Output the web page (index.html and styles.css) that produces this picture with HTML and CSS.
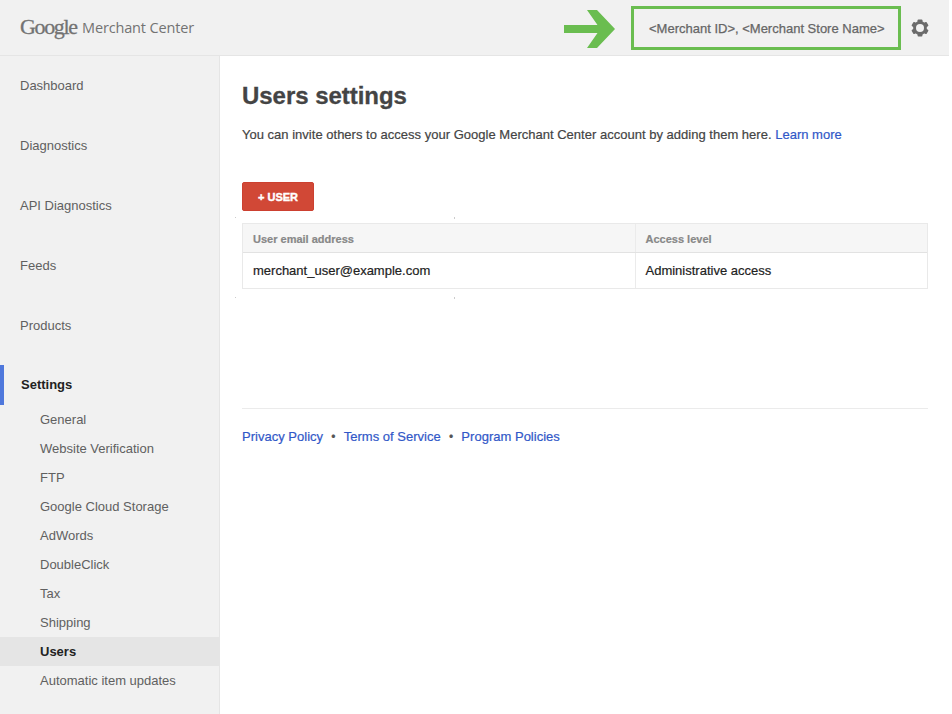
FILE: index.html
```html
<!DOCTYPE html>
<html lang="en">
<head>
<meta charset="utf-8">
<title>Google Merchant Center</title>
<link rel="stylesheet" href="styles.css">
</head>
<body>
<header class="topbar">
  <div class="brand"><span class="brand-google">Google</span><span class="brand-product">Merchant Center</span></div>
  <div class="account">
    <svg class="arrow" width="52" height="38" viewBox="0 0 52 38"><path d="M0 15H33.500L23 0H33L51 19L33 38H23L33.500 23H0Z" fill="#6abd50"/></svg>
    <div class="account-name"><span>&lt;Merchant ID&gt;, &lt;Merchant Store Name&gt;</span></div>
    <svg class="gear" width="18" height="18" viewBox="-9 -9 18 18" fill="#6b6b6b">
      <g><rect x="-2.400" y="-8.600" width="4.800" height="17.200" rx=".8"/><rect x="-2.400" y="-8.600" width="4.800" height="17.200" rx=".8" transform="rotate(60)"/><rect x="-2.400" y="-8.600" width="4.800" height="17.200" rx=".8" transform="rotate(120)"/></g>
      <circle r="6.900"/><circle r="4" fill="#f1f1f1"/>
    </svg>
  </div>
</header>
<div class="layout">
  <nav class="sidebar">
    <a class="item">Dashboard</a>
    <a class="item">Diagnostics</a>
    <a class="item">API Diagnostics</a>
    <a class="item">Feeds</a>
    <a class="item">Products</a>
    <a class="item active">Settings</a>
    <div class="sub">
      <a>General</a>
      <a>Website Verification</a>
      <a>FTP</a>
      <a>Google Cloud Storage</a>
      <a>AdWords</a>
      <a>DoubleClick</a>
      <a>Tax</a>
      <a>Shipping</a>
      <a class="current">Users</a>
      <a>Automatic item updates</a>
    </div>
  </nav>
  <main class="content">
    <h1>Users settings</h1>
    <p class="intro">You can invite others to access your Google Merchant Center account by adding them here. <a class="learn">Learn more</a></p>
    <button class="add">+ USER</button>
    <div class="users">
      <i class="tick tl"></i><i class="tick tr"></i><i class="tick bl"></i><i class="tick br"></i>
      <div class="row head"><span>User email address</span><span>Access level</span></div>
      <div class="row"><span class="email">merchant_user@example.com</span><span class="level">Administrative access</span></div>
    </div>
    <footer class="footer"><a>Privacy Policy</a><b>•</b><a>Terms of Service</a><b>•</b><a>Program Policies</a></footer>
  </main>
</div>
</body>
</html>
```
FILE: styles.css
```css
* { box-sizing: border-box; }
body { margin: 0; width: 952px; height: 714px; overflow: hidden; background: #fff; color: #444; font: 13px/20px "Liberation Sans", Arial, sans-serif; display: flex; flex-direction: column; }
.topbar { width: 949px; height: 56px; flex: none; background: #f1f1f1; border-bottom: 1px solid #e5e5e5; display: flex; justify-content: space-between; padding: 0 20px; }
.brand { display: flex; align-items: flex-start; color: #737373; padding-top: 12px; white-space: nowrap; }
.brand-google { width: 62px; font: 22px/30px "Liberation Serif", serif; letter-spacing: -1.35px; -webkit-text-stroke: .3px #737373; }
.brand-product { font: 14.5px/32px "Open Sans", sans-serif; letter-spacing: -.15px; }
.account { display: flex; align-items: flex-start; }
.arrow { margin: 10px 15px 0 0; }
.account-name { width: 270px; height: 44px; margin-top: 6px; border: 3px solid #6abd50; padding: 10px 0 0 15px; color: #666; white-space: nowrap; -webkit-text-stroke: .25px; }
.gear { margin: 19px 0 0 10px; }
.layout { display: flex; flex: 1; }
.sidebar { width: 220px; background: #f1f1f1; border-right: 1px solid #e5e5e5; padding-top: 9px; color: #606060; }
.item { display: block; height: 40px; margin-bottom: 20px; padding-left: 20px; line-height: 42px; }
.active { margin-bottom: 0; border-left: 4px solid #4f78dc; padding-left: 17px; color: #222; font-weight: bold; line-height: 40px; }
.sub a { display: block; height: 29px; padding-left: 40px; line-height: 29px; }
.sub .current { background: #e5e5e5; color: #222; font-weight: bold; }
.content { width: 708px; padding: 24px 0 0 22px; }
h1 { margin: 0; font-size: 24px; line-height: 32px; letter-spacing: -.04px; -webkit-text-stroke: .3px; }
.intro { margin: 13px 0 0; white-space: nowrap; letter-spacing: .012px; -webkit-text-stroke: .2px; }
.intro a, .footer a { color: #3158c8; }
.add { display: block; width: 72px; height: 29px; margin: 37px 0 12px; padding: 1px 0 0; background: #d14836; border: 1px solid #cc4030; border-radius: 2px; color: #fff; font: bold 11px/27px "Liberation Sans", sans-serif; -webkit-text-stroke: .4px; }
.users { position: relative; width: 686px; border: 1px solid #e9e9e9; }
.row { display: grid; grid-template-columns: 392px 1fr; height: 35px; line-height: 35px; color: #222; -webkit-text-stroke: .2px; }
.row span { padding-left: 10px; }
.row span + span { border-left: 1px solid #ebebeb; padding-left: 9.5px; }
.head { height: 29px; line-height: 30px; background: #f6f6f6; border-bottom: 1px solid #e2e2e2; color: #888; font-size: 11px; font-weight: bold; }
.row.head span { height: 28px; }
.tick { position: absolute; width: 1px; height: 1px; background: #ccc; }
.tl { left: -8px; top: -7px; }
.tr { left: 211px; top: -7px; height: 2px; }
.bl { left: -8px; top: 73px; }
.br { left: 211px; top: 73px; height: 2px; }
.footer { display: flex; margin-top: 119px; padding-top: 18px; border-top: 1px solid #ebebeb; width: 686px; letter-spacing: .015px; -webkit-text-stroke: .2px; }
.footer b { width: 20.6px; text-align: center; font-weight: normal; font-size: 12px; color: #555; }
```
